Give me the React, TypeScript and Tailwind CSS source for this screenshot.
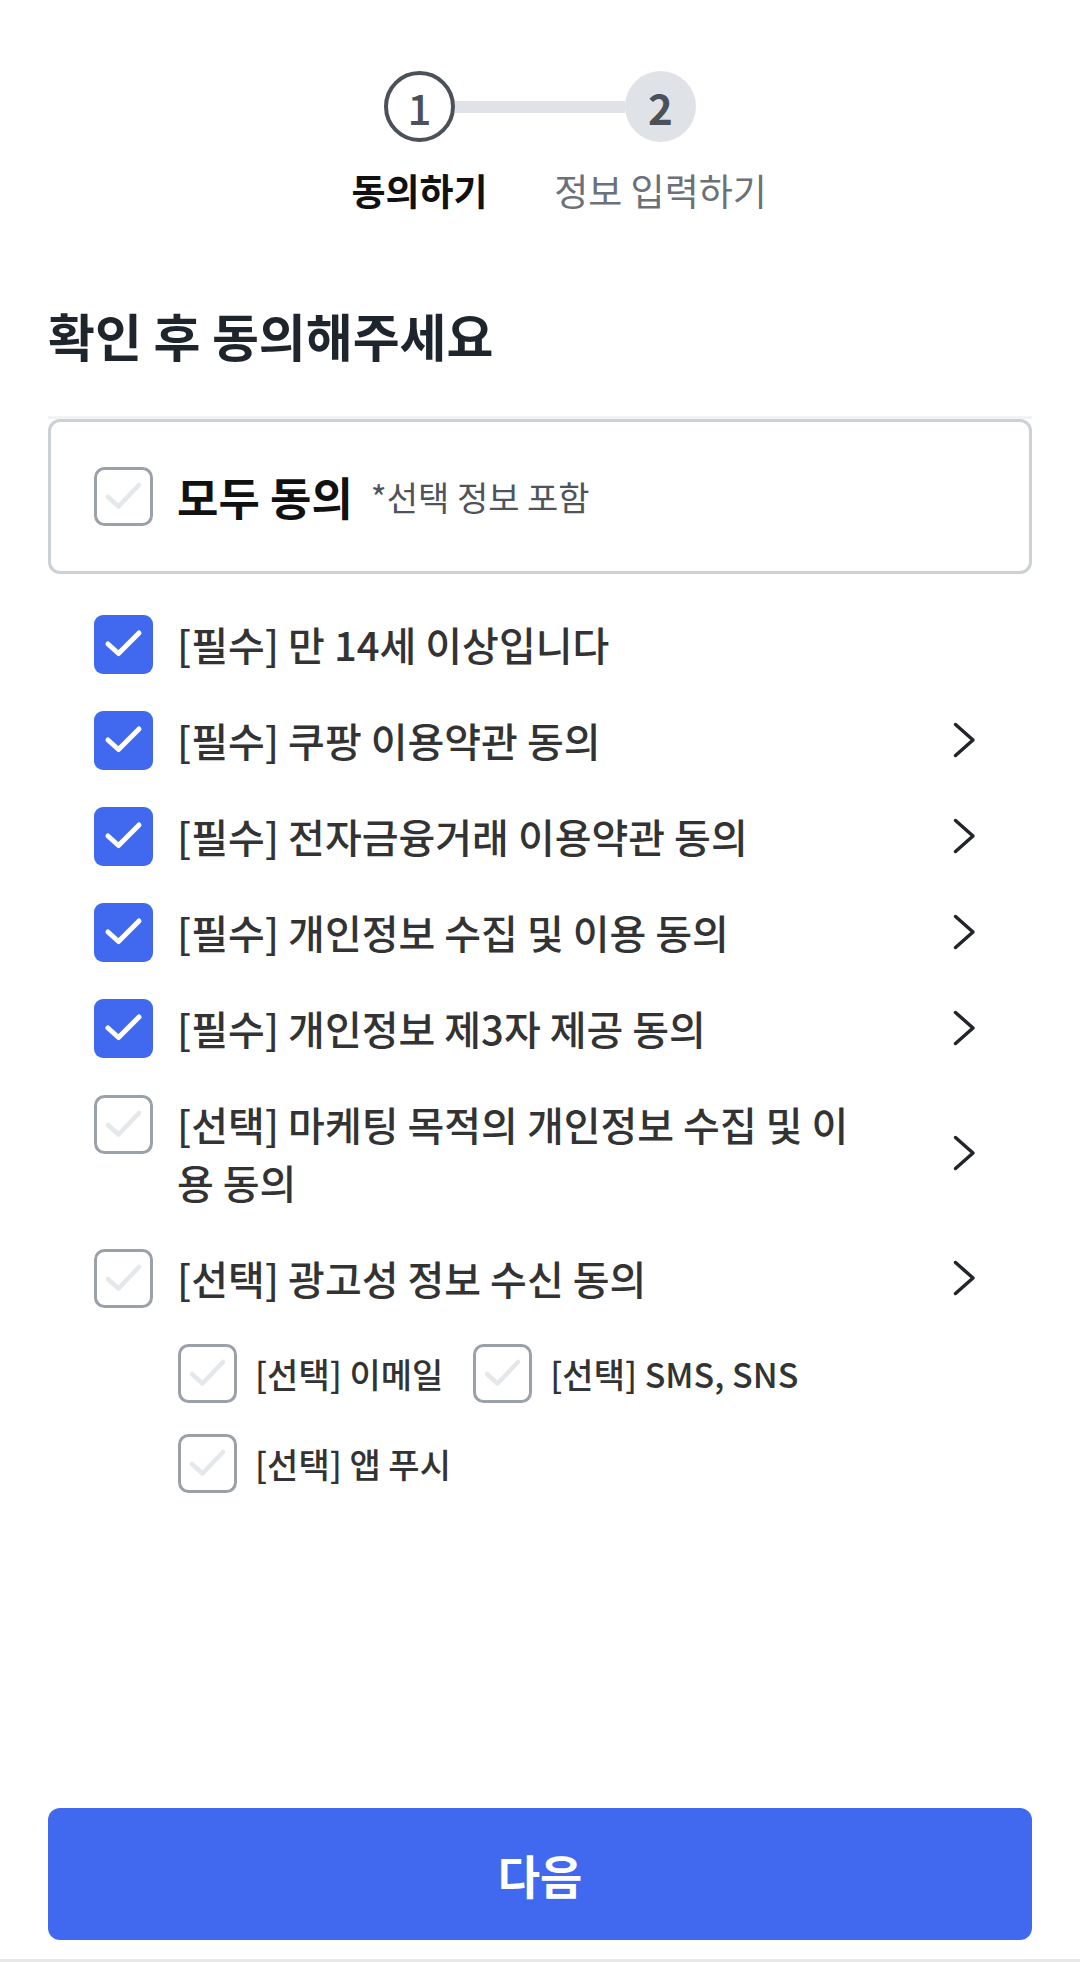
import React from "react";

const FONT = { fontFamily: '"Noto Sans CJK KR", "Noto Sans", sans-serif' };

function Check({ checked }: { checked: boolean }) {
  if (checked) {
    return (
      <svg width="59" height="59" viewBox="0 0 59 59" className="shrink-0">
        <rect x="0" y="0" width="59" height="59" rx="9" fill="#4169f0" />
        <path d="M14 29 L24.5 38.5 L45 18" fill="none" stroke="#ffffff" strokeWidth="5" strokeLinecap="round" strokeLinejoin="round" />
      </svg>
    );
  }
  return (
    <svg width="59" height="59" viewBox="0 0 59 59" className="shrink-0">
      <rect x="1.5" y="1.5" width="56" height="56" rx="9" fill="#ffffff" stroke="#9aa1a9" strokeWidth="3" />
      <path d="M14 30 L24.5 39.5 L45 18" fill="none" stroke="#e5e8eb" strokeWidth="4.5" strokeLinecap="round" strokeLinejoin="round" />
    </svg>
  );
}

function Chevron() {
  return (
    <svg width="36" height="36" viewBox="0 0 36 36" className="shrink-0">
      <path d="M9.5 2.5 L27 18 L9.5 33.5" fill="none" stroke="#22262b" strokeWidth="3.5" strokeLinecap="round" strokeLinejoin="round" />
    </svg>
  );
}

const rows: { text: string; checked: boolean; chevron: boolean }[] = [
  { text: "[필수] 만 14세 이상입니다", checked: true, chevron: false },
  { text: "[필수] 쿠팡 이용약관 동의", checked: true, chevron: true },
  { text: "[필수] 전자금융거래 이용약관 동의", checked: true, chevron: true },
  { text: "[필수] 개인정보 수집 및 이용 동의", checked: true, chevron: true },
  { text: "[필수] 개인정보 제3자 제공 동의", checked: true, chevron: true },
  { text: "[선택] 마케팅 목적의 개인정보 수집 및 이용 동의", checked: false, chevron: true },
  { text: "[선택] 광고성 정보 수신 동의", checked: false, chevron: true },
];

export default function App() {
  return (
    <div className="w-[1080px] h-[1962px] bg-white flex flex-col" style={FONT}>
      {/* Stepper */}
      <div className="pt-[71px] flex flex-col items-center">
        <div className="flex items-center">
          <div className="w-[71px] h-[71px] rounded-full border-[4px] border-[#4a5159] bg-white flex items-center justify-center">
            <span className="text-[42px] leading-none font-medium text-[#4a5159]">1</span>
          </div>
          <div className="w-[170px] h-[12px] bg-[#dfe2e6]" />
          <div className="w-[71px] h-[71px] rounded-full bg-[#dfe2e6] flex items-center justify-center">
            <span className="text-[42px] leading-none font-semibold text-[#4a5159]">2</span>
          </div>
        </div>
        <div className="mt-[26px] grid grid-cols-2 w-[482px] text-center">
          <span className="text-[37px] leading-[44px] font-bold text-[#111111] whitespace-nowrap">동의하기</span>
          <span className="text-[37px] leading-[44px] font-normal text-[#6b7178] whitespace-nowrap">정보 입력하기</span>
        </div>
      </div>

      {/* Title */}
      <div className="px-12 mt-[93px]">
        <h1 className="text-[51px] leading-[60px] font-bold text-[#1f252d]">확인 후 동의해주세요</h1>
      </div>

      {/* All agree box */}
      <div className="px-12 mt-[51px]">
        <div className="h-[3px] bg-[#f1f2f4]" />
        <div className="h-[155px] border-[3px] border-[#ccd1d6] rounded-[12px] flex items-center pl-[43px]">
          <Check checked={false} />
          <span className="ml-[24px] text-[45px] leading-none font-bold text-[#111111]">모두 동의</span>
          <span className="ml-[18px] text-[34px] leading-none text-[#4f545a]">*선택 정보 포함</span>
        </div>
      </div>

      {/* Rows */}
      <div className="px-12 mt-[22px] flex flex-col">
        {rows.map((r, i) => (
          <div key={i} className="flex items-center py-[19px] pl-[46px] pr-[50px]">
            <div className="flex items-start gap-[24px]">
              <div className="h-[58px] flex items-center">
                <Check checked={r.checked} />
              </div>
              <div className="w-[695px] text-[40px] leading-[58px] font-medium text-[#333333]">{r.text}</div>
            </div>
            <div className="ml-auto">{r.chevron ? <Chevron /> : null}</div>
          </div>
        ))}

        {/* Sub options */}
        <div className="pl-[130px] mt-[18px] flex flex-wrap gap-x-[30px] gap-y-[31px]">
          {["[선택] 이메일", "[선택] SMS, SNS", "[선택] 앱 푸시"].map((t) => (
            <div key={t} className="flex items-center gap-[18px] h-[59px]">
              <Check checked={false} />
              <span className="text-[34px] leading-none font-medium text-[#333333]">{t}</span>
            </div>
          ))}
        </div>
      </div>

      {/* Button */}
      <div className="mt-auto px-12">
        <button className="w-full h-[132px] rounded-[12px] bg-[#4169f0] text-white text-[46px] font-bold flex items-center justify-center">
          다음
        </button>
      </div>
      <div className="h-[19px]" />
      <div className="h-[3px] bg-[#e8e8e8]" />
    </div>
  );
}
